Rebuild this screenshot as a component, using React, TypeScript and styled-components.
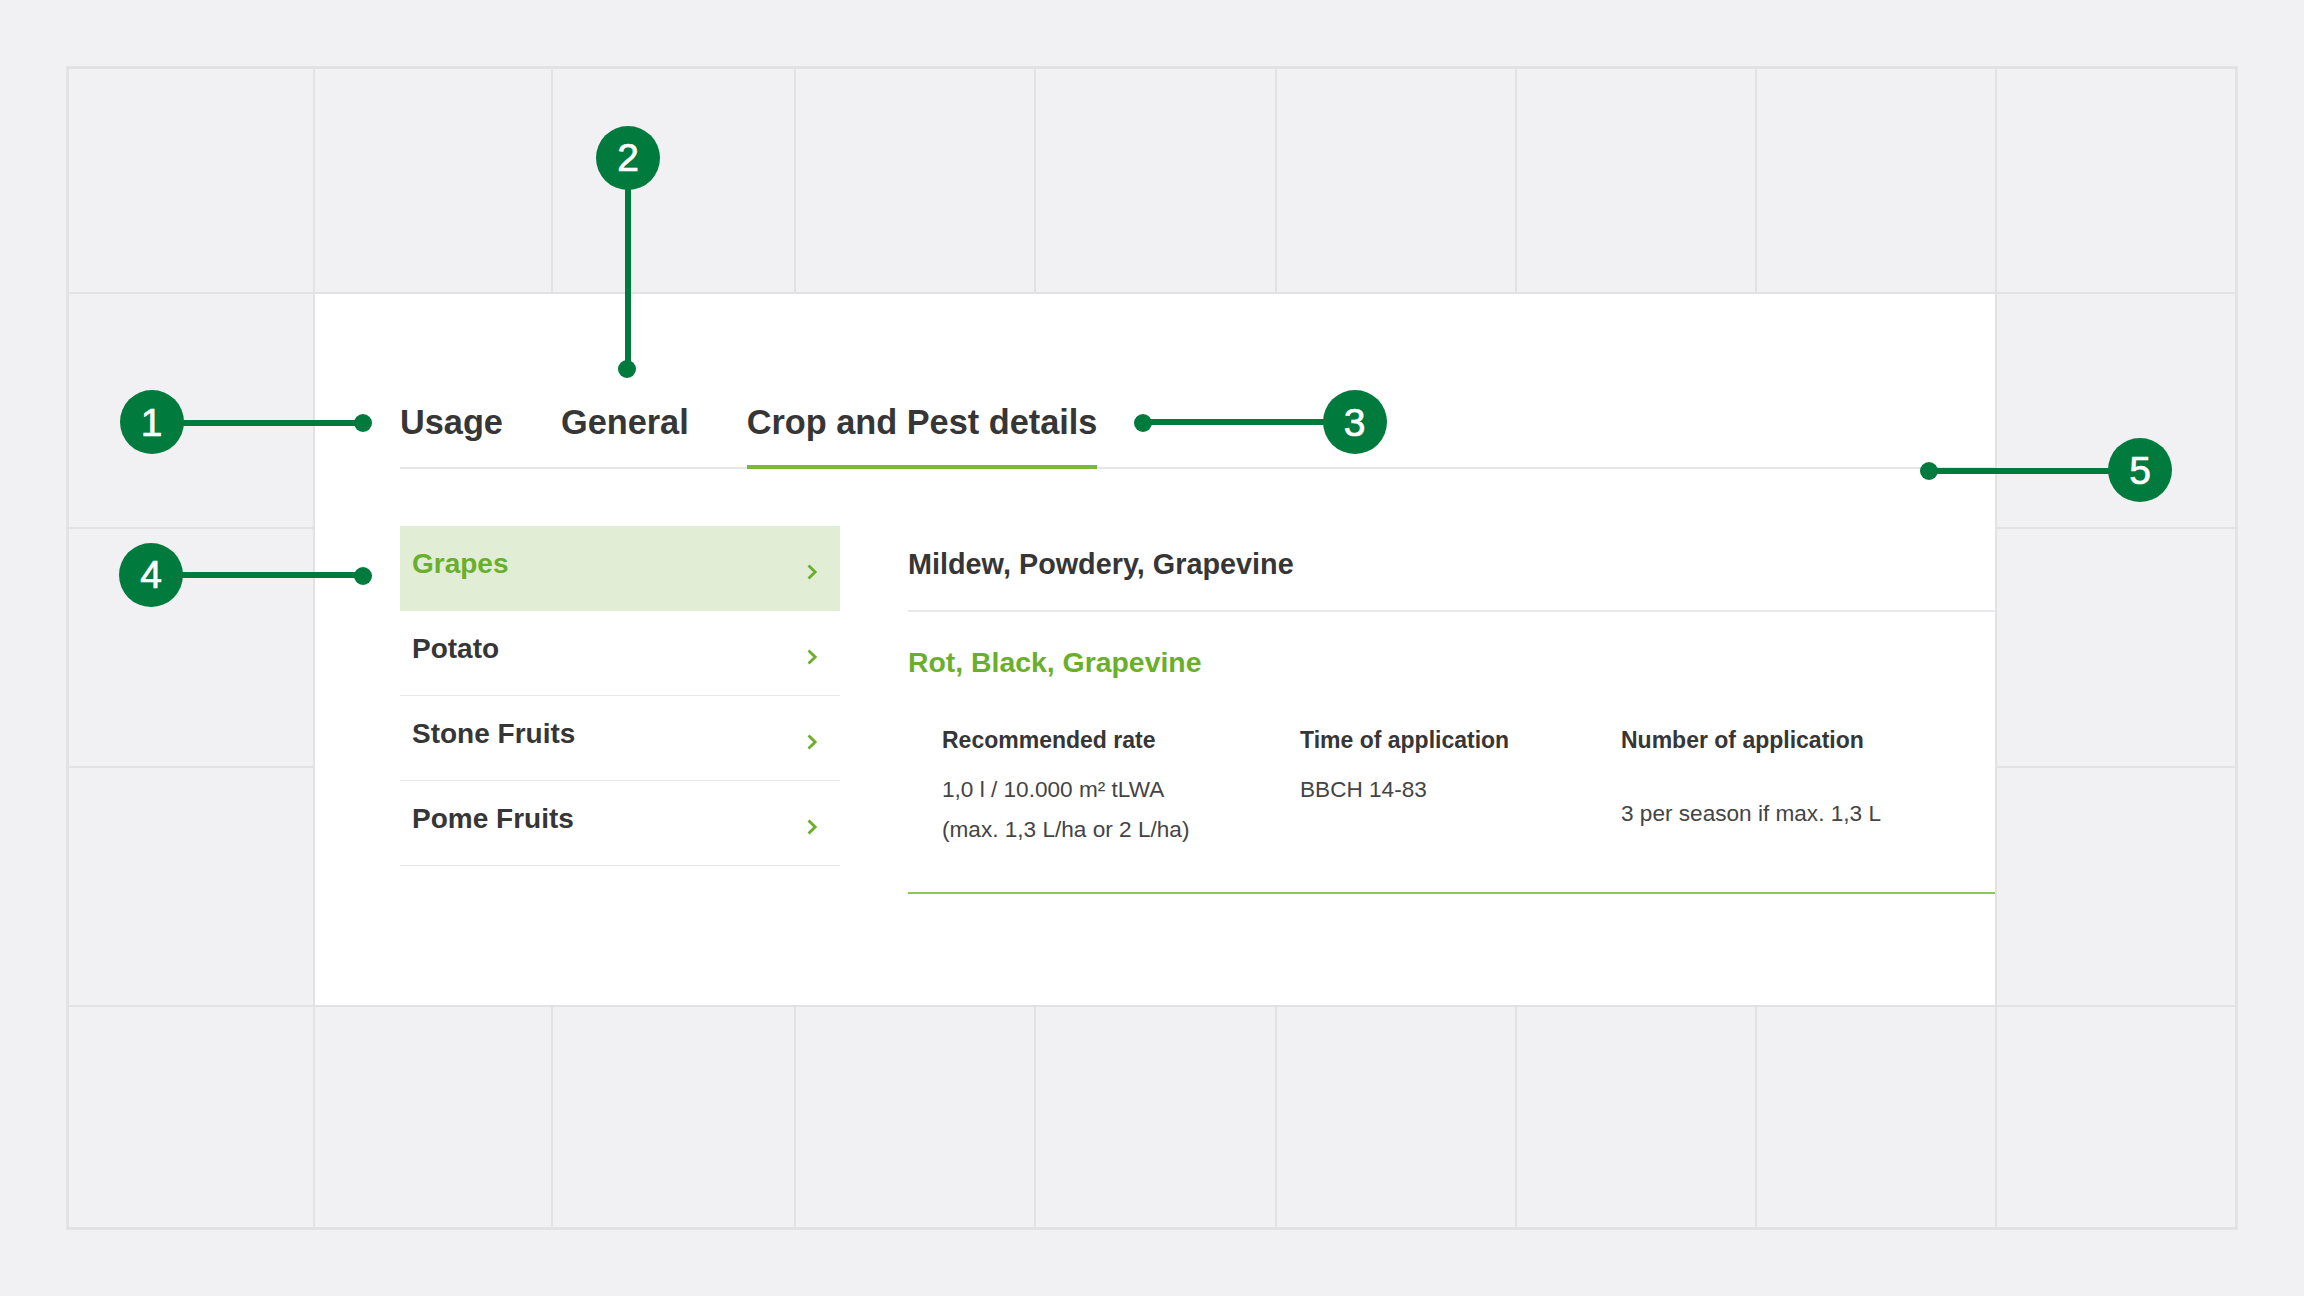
import React from "react";
import styled, { createGlobalStyle } from "styled-components";

const GlobalStyle = createGlobalStyle`
  html, body { margin: 0; padding: 0; background: #f1f1f3; }
  body {
    font-family: "Liberation Sans", Arial, Helvetica, sans-serif;
    color: #333;
  }
  * { box-sizing: border-box; }
`;

const GREEN_DARK = "#007a3d";
const GREEN = "#6aaf2c";
const GREEN_LINE = "#78b935";
const LINE_GREY = "#e2e2e5";

const Page = styled.div`
  position: relative;
  width: 2304px;
  height: 1296px;
  padding: 66px 0 0 66px;
  overflow: hidden;
  background: #f1f1f3;
`;

const Board = styled.div`
  display: grid;
  grid-template-columns: 244px 236px 241px 238px 239px 238px 238px 238px 238px;
  grid-template-rows: 223px 233px 237px 237px 220px;
  gap: 2px;
  width: max-content;
  background: ${LINE_GREY};
  border: 3px solid ${LINE_GREY};
`;

const Cell = styled.div`
  background: #f1f1f3;
`;

const Card = styled.section`
  grid-column: 2 / 9;
  grid-row: 2 / 5;
  background: #ffffff;
  padding: 108px 0 0 85px;
  display: flex;
  flex-direction: column;
`;

const TabBar = styled.nav`
  display: flex;
  gap: 58px;
  border-bottom: 2px solid #e6e6e8;
`;

const Tab = styled.div<{ $active?: boolean }>`
  font-size: 34.3px;
  font-weight: 700;
  line-height: 40px;
  color: #363636;
  padding-bottom: 23px;
  margin-bottom: -2px;
  border-bottom: 4px solid ${(p) => (p.$active ? GREEN_LINE : "transparent")};
  white-space: nowrap;
`;

const Body = styled.div`
  display: flex;
  align-items: flex-start;
  gap: 68px;
  margin-top: 57px;
`;

const CropList = styled.ul`
  list-style: none;
  margin: 0;
  padding: 0;
  width: 440px;
  flex: none;
`;

const CropRow = styled.li<{ $active?: boolean }>`
  display: flex;
  align-items: center;
  justify-content: space-between;
  height: 85px;
  padding: 0 22px 0 12px;
  border-bottom: 1px solid ${(p) => (p.$active ? "#e1eed5" : "#e7e7e9")};
  background: ${(p) => (p.$active ? "#e1eed5" : "transparent")};
  color: ${(p) => (p.$active ? GREEN : "#363636")};
`;

const CropLabel = styled.span`
  font-size: 28px;
  font-weight: 700;
  line-height: 32px;
  margin-bottom: 8px;
`;

const ChevronBox = styled.span`
  display: flex;
  margin-top: 7px;
`;

const Detail = styled.div`
  flex: 1;
  display: flex;
  flex-direction: column;
`;

const DetailHead = styled.div`
  height: 86px;
  display: flex;
  align-items: center;
  border-bottom: 2px solid #e8e8ea;
`;

const DetailHeadText = styled.span`
  font-size: 28.8px;
  font-weight: 700;
  line-height: 32px;
  color: #363636;
  margin-bottom: 8px;
`;

const PestTitle = styled.h3`
  margin: 34px 0 0;
  font-size: 28.4px;
  font-weight: 700;
  line-height: 32px;
  color: ${GREEN};
`;

const RateTable = styled.div`
  display: grid;
  grid-template-columns: 358px 321px 1fr;
  row-gap: 16px;
  padding: 48px 0 42px 34px;
  border-bottom: 2px solid #8cc657;
`;

const HeadCell = styled.div`
  font-size: 23px;
  font-weight: 700;
  line-height: 28px;
  color: #363636;
  white-space: nowrap;
`;

const ValueCell = styled.div<{ $centered?: boolean }>`
  font-size: 22.6px;
  font-weight: 400;
  line-height: 40px;
  color: #444;
  white-space: nowrap;
  align-self: ${(p) => (p.$centered ? "center" : "start")};
  padding-top: ${(p) => (p.$centered ? "8px" : "0")};
`;

/* ---------- annotation callouts (overlay) ---------- */

const Badge = styled.div<{ $x: number; $y: number }>`
  position: absolute;
  left: ${(p) => p.$x - 32}px;
  top: ${(p) => p.$y - 32}px;
  width: 64px;
  height: 64px;
  border-radius: 50%;
  background: ${GREEN_DARK};
  color: #fff;
  display: flex;
  align-items: center;
  justify-content: center;
  font-family: "Liberation Sans", Arial, sans-serif;
  font-size: 39px;
  line-height: 1;
  -webkit-text-stroke: 0.7px #fff;
`;

const Dot = styled.div<{ $x: number; $y: number }>`
  position: absolute;
  left: ${(p) => p.$x - 9}px;
  top: ${(p) => p.$y - 9}px;
  width: 18px;
  height: 18px;
  border-radius: 50%;
  background: ${GREEN_DARK};
`;

const Leader = styled.div<{ $l: number; $t: number; $w: number; $h: number }>`
  position: absolute;
  left: ${(p) => p.$l}px;
  top: ${(p) => p.$t}px;
  width: ${(p) => p.$w}px;
  height: ${(p) => p.$h}px;
  background: ${GREEN_DARK};
`;

type Pt = { x: number; y: number };

function Callout({ n, badge, dot }: { n: number; badge: Pt; dot: Pt }) {
  const horizontal = Math.abs(badge.x - dot.x) > Math.abs(badge.y - dot.y);
  const leader = horizontal
    ? {
        l: Math.min(badge.x, dot.x),
        t: (badge.y + dot.y) / 2 - 3,
        w: Math.abs(badge.x - dot.x),
        h: 6,
      }
    : {
        l: (badge.x + dot.x) / 2 - 3,
        t: Math.min(badge.y, dot.y),
        w: 6,
        h: Math.abs(badge.y - dot.y),
      };
  return (
    <>
      <Leader $l={leader.l} $t={leader.t} $w={leader.w} $h={leader.h} />
      <Dot $x={dot.x} $y={dot.y} />
      <Badge $x={badge.x} $y={badge.y}>{n}</Badge>
    </>
  );
}

function Chevron() {
  return (
    <svg width="12" height="16" viewBox="0 0 12 16" fill="none">
      <polyline
        points="2.5,1.5 9.2,8 2.5,14.5"
        stroke={GREEN}
        strokeWidth="2.8"
        strokeLinejoin="miter"
      />
    </svg>
  );
}

const crops = ["Grapes", "Potato", "Stone Fruits", "Pome Fruits"];

const callouts: { n: number; badge: Pt; dot: Pt }[] = [
  { n: 1, badge: { x: 151.5, y: 422 }, dot: { x: 362.5, y: 423 } },
  { n: 2, badge: { x: 628, y: 157.5 }, dot: { x: 627, y: 369 } },
  { n: 3, badge: { x: 1354.5, y: 422 }, dot: { x: 1143, y: 422.5 } },
  { n: 4, badge: { x: 151, y: 574.5 }, dot: { x: 362.5, y: 575.5 } },
  { n: 5, badge: { x: 2140, y: 470 }, dot: { x: 1928.5, y: 471 } },
];

export default function App() {
  return (
    <>
      <GlobalStyle />
      <Page>
        <Board>
          <Card>
            <TabBar>
              <Tab>Usage</Tab>
              <Tab>General</Tab>
              <Tab $active>Crop and Pest details</Tab>
            </TabBar>
            <Body>
              <CropList>
                {crops.map((c, i) => (
                  <CropRow key={c} $active={i === 0}>
                    <CropLabel>{c}</CropLabel>
                    <ChevronBox>
                      <Chevron />
                    </ChevronBox>
                  </CropRow>
                ))}
              </CropList>
              <Detail>
                <DetailHead>
                  <DetailHeadText>Mildew, Powdery, Grapevine</DetailHeadText>
                </DetailHead>
                <PestTitle>Rot, Black, Grapevine</PestTitle>
                <RateTable>
                  <HeadCell>Recommended rate</HeadCell>
                  <HeadCell>Time of application</HeadCell>
                  <HeadCell>Number of application</HeadCell>
                  <ValueCell>
                    1,0 l / 10.000 m² tLWA
                    <br />
                    (max. 1,3 L/ha or 2 L/ha)
                  </ValueCell>
                  <ValueCell>BBCH 14-83</ValueCell>
                  <ValueCell $centered>3 per season if max. 1,3 L</ValueCell>
                </RateTable>
              </Detail>
            </Body>
          </Card>
          {Array.from({ length: 24 }).map((_, i) => (
            <Cell key={i} />
          ))}
        </Board>
        {callouts.map((c) => (
          <Callout key={c.n} n={c.n} badge={c.badge} dot={c.dot} />
        ))}
      </Page>
    </>
  );
}
